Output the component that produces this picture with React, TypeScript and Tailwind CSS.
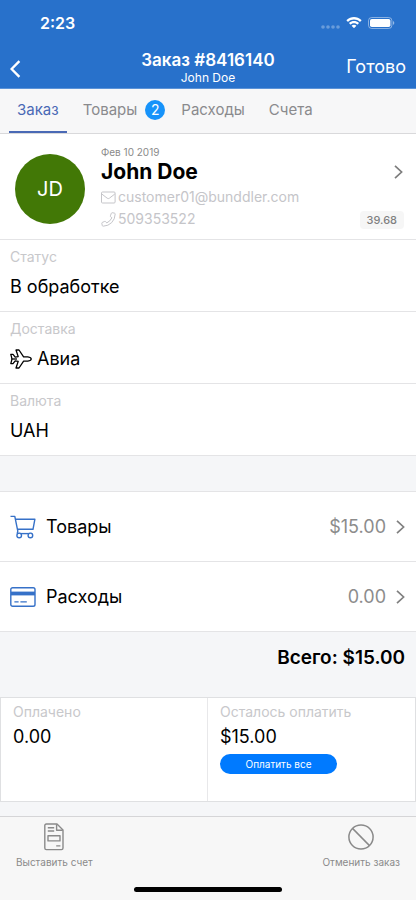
import { useState } from 'react';

const Chevron = ({ className = '' }: { className?: string }) => (
  <svg className={className} width="10" height="16" viewBox="0 0 10 16" fill="none" stroke="currentColor" strokeWidth="1.7" aria-hidden="true">
    <path d="M1 1.8 L7.6 8 L1 14.2" />
  </svg>
);

const MailIcon = () => (
  <svg width="15" height="13" viewBox="0 0 15 13" fill="none" stroke="currentColor" strokeWidth="1" aria-hidden="true">
    <rect x="0.5" y="1" width="13.6" height="11" rx="1" />
    <path d="M0.8 3 L6.2 7.2 Q7.3 8 8.4 7.2 L13.8 3" />
  </svg>
);

const PhoneIcon = () => (
  <svg width="15" height="15" viewBox="0 0 15 15" fill="none" stroke="currentColor" strokeWidth="1" strokeLinejoin="round" aria-hidden="true">
    <path d="M11.2 0.7 L13.6 1.2 Q14.2 1.4 14.2 2 Q14 7.2 10.7 10.6 Q7.3 14 2.2 14.2 Q1.4 14.2 1.3 13.6 L0.8 11.3 Q0.7 10.7 1.2 10.5 L3.7 9.4 Q4.2 9.2 4.6 9.6 L5.8 10.9 Q9.2 9.3 10.9 5.8 L9.6 4.7 Q9.2 4.3 9.4 3.8 L10.4 1.2 Q10.7 0.6 11.2 0.7 Z" />
  </svg>
);

const PlaneIcon = () => (
  <svg width="22" height="20" viewBox="0 0 22 20" fill="none" stroke="currentColor" strokeWidth="1.3" strokeLinejoin="round" aria-hidden="true">
    <path d="M0.8 5.4 H3 L5.2 8.1 L8.2 7.6 L6 1 H9 L13.6 7.9 H17.8 Q21.2 8.4 21.2 10 Q21.2 11.6 17.8 12.1 H13.6 L9 19 H6 L8.2 12.4 L5.2 11.9 L3 14.6 H0.8 L1.8 10.8 V9.2 Z" />
    <path d="M1.8 10 H7" />
  </svg>
);

const CartIcon = () => (
  <svg width="26" height="24" viewBox="0 0 26 24" fill="none" stroke="currentColor" strokeWidth="1.4" strokeLinejoin="round" aria-hidden="true">
    <path d="M0.5 1.4 H4.8 L7.8 16.2 L7.2 18.6" />
    <path d="M5.4 4.2 H24.9 L23 14.3 H7.6" />
    <path d="M7.2 18.6 H22.2" />
    <circle cx="9.2" cy="20.4" r="2.3" className="fill-white" />
    <circle cx="20.4" cy="20.4" r="2.3" className="fill-white" />
  </svg>
);

const CardIcon = () => (
  <svg width="26" height="20" viewBox="0 0 26 20" fill="none" stroke="currentColor" strokeWidth="1.4" aria-hidden="true">
    <rect x="0.8" y="0.7" width="24.2" height="18.6" rx="1.8" />
    <rect x="1" y="4.6" width="24" height="3.8" fill="currentColor" stroke="none" />
    <path d="M4.4 14.9 H8.6 M10.4 14.9 H16.8" />
  </svg>
);

const InvoiceIcon = () => (
  <svg width="20" height="28" viewBox="0 0 20 28" fill="none" stroke="currentColor" strokeWidth="1.4" strokeLinejoin="round" aria-hidden="true">
    <path d="M13 1 H2.4 Q0.8 1 0.8 2.6 V25 Q0.8 26.6 2.4 26.6 H17.4 Q19 26.6 19 25 V7 Z" />
    <path d="M12.6 1.2 V7.2 H18.8" />
    <path d="M3.8 4.7 H10.2 M3.8 8 H10.2 M12.2 22.9 H16.4" />
    <rect x="4" y="12.7" width="12" height="5.2" />
  </svg>
);

const BanIcon = () => (
  <svg width="26" height="28" viewBox="0 0 26 28" fill="none" stroke="currentColor" strokeWidth="1.5" aria-hidden="true">
    <circle cx="13" cy="14" r="12.1" />
    <path d="M4.5 5.4 L21.5 22.6" />
  </svg>
);

const StatusIcons = () => (
  <div className="flex items-center gap-1.5 text-white">
    <svg width="19" height="4" viewBox="0 0 19 4" className="mt-2 opacity-30" fill="currentColor" aria-hidden="true">
      <circle cx="2" cy="2" r="1.8" />
      <circle cx="7" cy="2" r="1.8" />
      <circle cx="12" cy="2" r="1.8" />
      <circle cx="17" cy="2" r="1.8" />
    </svg>
    <svg width="16" height="12" viewBox="0 0 16 12" fill="currentColor" aria-hidden="true">
      <path d="M8 2.5 C10.2 2.5 12.3 3.4 13.8 4.8 Q14 5 14.2 4.8 L15.4 3.6 Q15.6 3.3 15.4 3.1 C11.3 -0.9 4.7 -0.9 0.6 3.1 Q0.4 3.3 0.6 3.6 L1.8 4.8 Q2 5 2.2 4.8 C3.7 3.4 5.8 2.5 8 2.5 Z" />
      <path d="M8 6.3 C9.2 6.3 10.4 6.8 11.2 7.5 Q11.5 7.7 11.7 7.5 L12.8 6.3 Q13 6 12.8 5.8 C10.1 3.4 5.9 3.4 3.2 5.8 Q3 6 3.2 6.3 L4.3 7.5 Q4.5 7.7 4.8 7.5 C5.6 6.8 6.8 6.3 8 6.3 Z" />
      <path d="M10.2 8.9 Q10.4 8.7 10.2 8.5 C8.9 7.4 7.1 7.4 5.8 8.5 Q5.6 8.7 5.8 8.9 L7.8 11 Q8 11.2 8.2 11 Z" />
    </svg>
    <svg width="27" height="12" viewBox="0 0 27 12" fill="currentColor" aria-hidden="true">
      <rect x="0.5" y="0.5" width="23.4" height="11" rx="3.2" fill="none" stroke="currentColor" strokeOpacity="0.45" />
      <rect x="2" y="2" width="20.4" height="8" rx="1.8" />
      <path d="M25 4.1 Q26.3 4.7 26.3 6 Q26.3 7.3 25 7.9 Z" opacity="0.5" />
    </svg>
  </div>
);

const tabs = [
  { id: 'order', name: 'Заказ', count: 0 },
  { id: 'goods', name: 'Товары', count: 2 },
  { id: 'expenses', name: 'Расходы', count: 0 },
  { id: 'invoices', name: 'Счета', count: 0 },
];

const fields = [
  { label: 'Статус', value: 'В обработке', icon: null },
  { label: 'Доставка', value: 'Авиа', icon: <PlaneIcon /> },
  { label: 'Валюта', value: 'UAH', icon: null },
];

const sums = [
  { name: 'Товары', value: '$15.00', icon: <CartIcon /> },
  { name: 'Расходы', value: '0.00', icon: <CardIcon /> },
];

const App = () => {
  const [activeTab, setActiveTab] = useState<string>('order');

  return (
    <div className="flex min-h-screen flex-col bg-[#f5f6f8] font-['Inter','Liberation_Sans',sans-serif] text-black">
      {/* Header */}
      <header className="bg-[#2871cb] text-white">
        <div className="flex h-[46px] items-center justify-between pr-[21px] pl-10">
          <span className="text-base font-semibold">2:23</span>
          <StatusIcons />
        </div>
        <div className="grid h-[43px] grid-cols-[1fr_auto_1fr] items-center border-b border-[#5b93d8] px-2.5">
          <button type="button" aria-label="Назад" className="mt-1 justify-self-start">
            <svg width="12" height="18" viewBox="0 0 12 18" fill="none" stroke="currentColor" strokeWidth="2.4" aria-hidden="true">
              <path d="M9.4 1.2 L1.6 9 L9.4 16.8" />
            </svg>
          </button>
          <div className="pt-px text-center">
            <h1 className="text-[17px] leading-[19px] font-semibold">Заказ #8416140</h1>
            <p className="text-xs leading-[15px]">John Doe</p>
          </div>
          <button type="button" className="justify-self-end text-lg">Готово</button>
        </div>
      </header>

      {/* Tabs */}
      <nav className="flex h-[45px] gap-2 border-b border-[#d9d9db] bg-[#f7f7f8] pl-[9px]">
        {tabs.map((tab) => (
          <button
            key={tab.id}
            type="button"
            onClick={() => setActiveTab(tab.id)}
            className={`flex items-center gap-2 border-b-2 pl-2 text-[15px] ${tab.count > 0 ? 'pr-0' : 'pr-2'} ${
              activeTab === tab.id ? 'border-[#4a69b5] text-[#4a69b5]' : 'border-transparent text-[#8a8a8d]'
            }`}
          >
            {tab.name}
            {tab.count > 0 && (
              <span className="flex size-5 items-center justify-center rounded-full bg-[#1793fa] text-sm text-white">
                {tab.count}
              </span>
            )}
          </button>
        ))}
      </nav>

      {/* Customer */}
      <section className="flex h-[106px] border-b border-[#e4e4e6] bg-white pr-3 pl-[15px]">
        <div className="mt-5 flex size-[70px] shrink-0 items-center justify-center rounded-full bg-[#427806] text-xl text-white">
          JD
        </div>
        <div className="ml-4 flex-1 pt-3">
          <p className="text-[10px] leading-3 text-[#8a8a8a]">Фев 10 2019</p>
          <h2 className="text-[21px] leading-7 font-bold">John Doe</h2>
          <a href="mailto:customer01@bunddler.com" className="flex items-center gap-0.5 text-sm leading-[22px] text-[#c5c5c9]">
            <MailIcon />
            customer01@bunddler.com
          </a>
          <a href="tel:509353522" className="flex items-center gap-0.5 text-sm leading-[22px] text-[#c5c5c9]">
            <PhoneIcon />
            509353522
          </a>
        </div>
        <div className="flex flex-col items-end justify-between pt-[30px] pb-2.5">
          <button type="button" aria-label="Открыть клиента" className="text-[#7d7d7d]">
            <Chevron />
          </button>
          <span className="rounded-sm bg-[#f6f6f6] px-[7px] text-[11px] leading-[18px] font-medium text-[#808080]">39.68</span>
        </div>
      </section>

      {/* Order fields */}
      <dl className="bg-white">
        {fields.map((field) => (
          <div key={field.label} className="h-[72px] border-b border-[#e4e4e6] px-2.5 pt-2">
            <dt className="text-sm leading-[18px] text-[#c8c8cb]">{field.label}</dt>
            <dd className="mt-[9px] flex items-center gap-[5px] text-lg leading-6">
              {field.icon}
              {field.value}
            </dd>
          </div>
        ))}
      </dl>

      {/* Sums */}
      <section className="mt-[35px] border-t border-[#e4e4e6] bg-white">
        {sums.map((sum) => (
          <button
            key={sum.name}
            type="button"
            className="flex h-[70px] w-full items-center border-b border-[#e4e4e6] px-2.5 text-lg"
          >
            <span className="text-[#3671c8]">{sum.icon}</span>
            <span className="ml-2.5">{sum.name}</span>
            <span className="ml-auto text-[#8c8c8c]">{sum.value}</span>
            <Chevron className="ml-2.5 text-[#808080]" />
          </button>
        ))}
      </section>
      <p className="py-3 pr-[11px] text-right text-[19px] leading-7 font-semibold">Всего: $15.00</p>

      {/* Payment */}
      <section className="mt-[13px] grid h-[105px] grid-cols-2 divide-x divide-[#e8e8ea] border border-[#dfe0e2] bg-white">
        <div className="px-3 pt-[5px]">
          <p className="text-sm leading-[18px] text-[#c8c8cb]">Оплачено</p>
          <p className="mt-1 text-lg leading-6">0.00</p>
        </div>
        <div className="px-3 pt-[5px]">
          <p className="text-sm leading-[18px] text-[#c8c8cb]">Осталось оплатить</p>
          <p className="mt-1 text-lg leading-6">$15.00</p>
          <button type="button" className="mt-[5px] block h-5 w-[117px] rounded-full bg-[#007aff] text-[10px] text-white">
            Оплатить все
          </button>
        </div>
      </section>

      {/* Bottom bar */}
      <footer className="mt-auto flex h-21 flex-col justify-between border-t border-[#d5d5d7] bg-[#f7f7f7] pb-2">
        <div className="flex justify-between px-4 pt-1.5 text-[10px] text-[#8a8a8a]">
          <button type="button" className="flex flex-col items-center gap-1">
            <InvoiceIcon />
            Выставить счет
          </button>
          <button type="button" className="flex flex-col items-center gap-1">
            <BanIcon />
            Отменить заказ
          </button>
        </div>
        <div className="mx-auto h-[5px] w-[148px] rounded-full bg-black" />
      </footer>
    </div>
  );
};

export default App;
